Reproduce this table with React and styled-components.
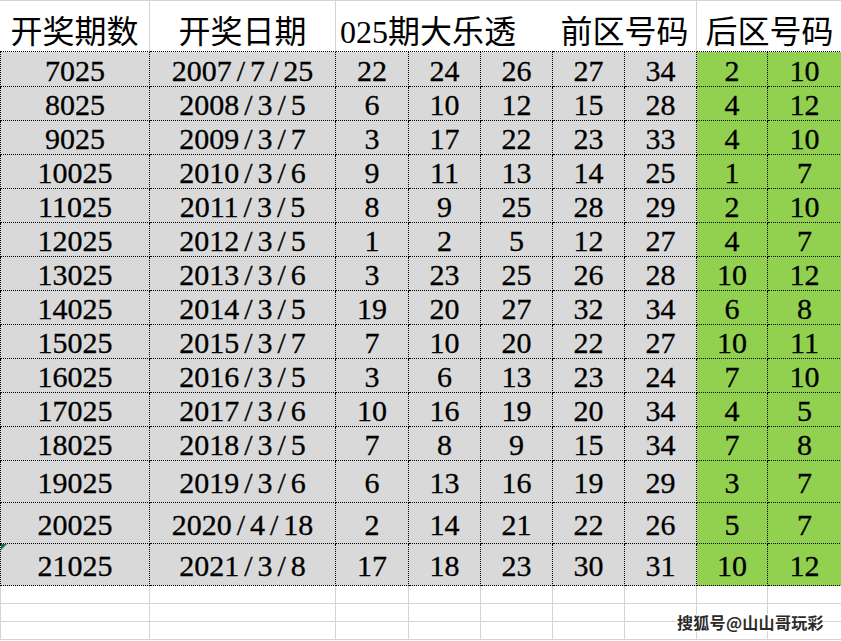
import React from "react";
import styled, { createGlobalStyle } from "styled-components";

const GlobalStyle = createGlobalStyle`
  html, body {
    margin: 0;
    padding: 0;
    background: #fff;
    overflow: hidden;
  }
  body {
    font-family: "Liberation Serif", "Times New Roman", serif;
    color: #000;
  }
`;

const Page = styled.div`
  position: relative;
  width: 841px;
  height: 641px;
  overflow: hidden;
`;

const Sheet = styled.div`
  display: grid;
  width: 842px;
  grid-template-columns: 150px 186px 73px 72px 72px 72px 72px 71px 74px;
  grid-template-rows: 52px 35px repeat(11, 34px) 42px 41px 42px repeat(3, 18px);
`;

const HeaderCell = styled.div`
  grid-column: span ${(p) => p.$span || 1};
  display: flex;
  align-items: center;
  justify-content: ${(p) => (p.$left ? "flex-start" : "center")};
  padding: 5px 0 0 ${(p) => (p.$left ? "4px" : "0")};
  box-sizing: border-box;
  border-top: 1px solid #d4d4d4;
  border-right: ${(p) => (p.$line ? "1px solid #d4d4d4" : "none")};
  border-bottom: 1px dotted #000;
  font-family: "Liberation Serif", "Noto Sans CJK SC", serif;
  font-size: 32px;
  white-space: nowrap;
  background: #fff;
`;

const Cell = styled.div`
  position: relative;
  display: flex;
  align-items: center;
  justify-content: center;
  padding-top: 3px;
  box-sizing: border-box;
  background: ${(p) => (p.$green ? "#92d050" : "#d9d9d9")};
  border-right: 1px dotted #000;
  border-bottom: 1px dotted #000;
  border-left: ${(p) => (p.$lead ? "1px dotted #000" : "none")};
  font-family: "Liberation Serif", "Times New Roman", serif;
  font-size: 30px;
  line-height: 1;
  -webkit-text-stroke: 0.3px #000;
  white-space: nowrap;

  ${(p) =>
    p.$flag &&
    `
    &::before {
      content: "";
      position: absolute;
      left: 0;
      top: 0;
      border-top: 6px solid #217346;
      border-right: 6px solid transparent;
    }
  `}
`;

const Slash = styled.span`
  margin: 0 5px;
`;

const EmptyCell = styled.div`
  box-sizing: border-box;
  border-right: 1px solid #d4d4d4;
  border-bottom: 1px solid #d4d4d4;
  border-left: ${(p) => (p.$lead ? "1px solid #d4d4d4" : "none")};
`;

const Watermark = styled.div`
  position: absolute;
  left: 677px;
  top: 610px;
  font-family: "Noto Sans CJK SC", sans-serif;
  font-weight: 700;
  font-size: 16px;
  letter-spacing: 0.3px;
  color: #2b2b2b;
  text-shadow: 0 0 1px #fff, 1px 1px 0 #fff, -1px -1px 0 #fff, 1px -1px 0 #fff,
    -1px 1px 0 #fff;
`;

const rows = [
  ["7025", "2007/7/25", 22, 24, 26, 27, 34, 2, 10],
  ["8025", "2008/3/5", 6, 10, 12, 15, 28, 4, 12],
  ["9025", "2009/3/7", 3, 17, 22, 23, 33, 4, 10],
  ["10025", "2010/3/6", 9, 11, 13, 14, 25, 1, 7],
  ["11025", "2011/3/5", 8, 9, 25, 28, 29, 2, 10],
  ["12025", "2012/3/5", 1, 2, 5, 12, 27, 4, 7],
  ["13025", "2013/3/6", 3, 23, 25, 26, 28, 10, 12],
  ["14025", "2014/3/5", 19, 20, 27, 32, 34, 6, 8],
  ["15025", "2015/3/7", 7, 10, 20, 22, 27, 10, 11],
  ["16025", "2016/3/5", 3, 6, 13, 23, 24, 7, 10],
  ["17025", "2017/3/6", 10, 16, 19, 20, 34, 4, 5],
  ["18025", "2018/3/5", 7, 8, 9, 15, 34, 7, 8],
  ["19025", "2019/3/6", 6, 13, 16, 19, 29, 3, 7],
  ["20025", "2020/4/18", 2, 14, 21, 22, 26, 5, 7],
  ["21025", "2021/3/8", 17, 18, 23, 30, 31, 10, 12],
];

function DateText({ value }) {
  const parts = value.split("/");
  return (
    <span>
      {parts.map((part, i) => (
        <React.Fragment key={i}>
          {i > 0 && <Slash>/</Slash>}
          {part}
        </React.Fragment>
      ))}
    </span>
  );
}

export default function App() {
  return (
    <Page>
      <GlobalStyle />
      <Sheet>
        <HeaderCell $line>开奖期数</HeaderCell>
        <HeaderCell $line>开奖日期</HeaderCell>
        <HeaderCell $span={3} $left>
          025期大乐透
        </HeaderCell>
        <HeaderCell $span={2} $line>
          前区号码
        </HeaderCell>
        <HeaderCell $span={2}>后区号码</HeaderCell>

        {rows.map((row, r) =>
          row.map((value, c) => (
            <Cell
              key={`${r}-${c}`}
              $lead={c === 0}
              $green={c >= 7}
              $flag={c === 0 && r === rows.length - 1}
            >
              {c === 1 ? <DateText value={value} /> : value}
            </Cell>
          ))
        )}

        {[0, 1, 2].map((r) =>
          Array.from({ length: 9 }).map((_, c) => (
            <EmptyCell key={`e${r}-${c}`} $lead={c === 0} />
          ))
        )}
      </Sheet>
      <Watermark>搜狐号@山山哥玩彩</Watermark>
    </Page>
  );
}
